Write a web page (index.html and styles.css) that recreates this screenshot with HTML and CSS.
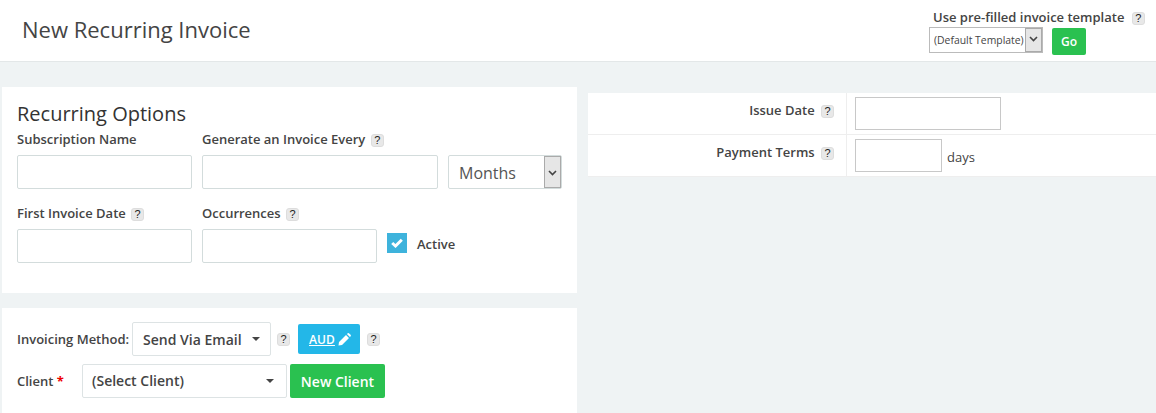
FILE: index.html
```html
<!DOCTYPE html>
<html lang="en">
<head>
<meta charset="utf-8">
<title>New Recurring Invoice</title>
<link rel="stylesheet" href="styles.css">
</head>
<body>
<header class="topbar">
  <h1 class="page-title">New Recurring Invoice</h1>
  <div class="template">
    <div class="template-label">Use pre-filled invoice template <span class="help help-wide">?</span></div>
    <div class="template-controls">
      <div class="sel sel-template">
        <select class="template-select"><option>(Default Template)</option></select>
        <span class="sel-btn"><svg width="9" height="6" viewBox="0 0 9 6"><path d="M1 1 4.5 4.5 8 1" fill="none" stroke="#444" stroke-width="1.6"/></svg></span>
      </div>
      <button class="btn-go" type="button">Go</button>
    </div>
  </div>
</header>
<main class="content">
  <div class="left">
    <section class="card card-options">
      <h2 class="card-title">Recurring Options</h2>
      <div class="row row-a">
        <div class="field">
          <label class="lbl">Subscription Name</label>
          <input class="input w175" type="text">
        </div>
        <div class="field">
          <label class="lbl">Generate an Invoice Every <span class="help">?</span></label>
          <input class="input w236" type="text">
        </div>
        <div class="sel sel-period">
          <select class="input period"><option>Months</option></select>
          <span class="sel-btn"><svg width="9" height="6" viewBox="0 0 9 6"><path d="M1 1 4.5 4.5 8 1" fill="none" stroke="#444" stroke-width="1.6"/></svg></span>
        </div>
      </div>
      <div class="row row-b">
        <div class="field">
          <label class="lbl">First Invoice Date <span class="help">?</span></label>
          <input class="input w175" type="text">
        </div>
        <div class="field">
          <label class="lbl">Occurrences <span class="help">?</span></label>
          <input class="input w175" type="text">
        </div>
        <div class="active">
          <span class="check"><svg width="12" height="10" viewBox="0 0 12 10"><path d="M1.2 5 4.5 8 10.8 1.8" fill="none" stroke="#fff" stroke-width="3"/></svg></span>
          <span class="lbl">Active</span>
        </div>
      </div>
    </section>
    <section class="card card-client">
      <div class="line line-method">
        <span class="lbl">Invoicing Method:</span>
        <div class="dropdown dd-method">Send Via Email<i class="caret"></i></div>
        <span class="help help-m1">?</span>
        <a class="btn-aud" href="#"><u>AUD</u><svg width="13" height="13" viewBox="0 0 13 13"><path d="M0.5 12.5 1 9 8 2 11 5 4 12Z M8.9 1.1 9.8.3Q10.5-.2 11.2.4L12.6 1.8Q13.2 2.5 12.7 3.2L11.9 4.1Z" fill="#fff"/></svg></a>
        <span class="help help-m2">?</span>
      </div>
      <div class="line line-client">
        <span class="lbl lbl-client">Client <b class="req">*</b></span>
        <div class="dropdown dd-client">(Select Client)<i class="caret"></i></div>
        <button class="btn-new" type="button">New Client</button>
      </div>
    </section>
  </div>
  <section class="right">
    <div class="dt-row">
      <div class="dt-label">Issue Date <span class="help help-dt">?</span></div>
      <div class="dt-value"><input class="plain w146" type="text"></div>
    </div>
    <div class="dt-row dt-last">
      <div class="dt-label">Payment Terms <span class="help help-dt">?</span></div>
      <div class="dt-value"><input class="plain w87" type="text"><span class="days">days</span></div>
    </div>
  </section>
</main>
</body>
</html>
```
FILE: styles.css
```css
* { box-sizing: border-box; }
html, body { margin: 0; height: 413px; overflow: hidden; }
body { background: #eff3f4; font-family: "Open Sans", sans-serif; color: #444; font-size: 13px; }

.topbar { height: 62px; background: #fff; border-bottom: 1px solid #e3e7e8; display: flex; justify-content: space-between; }
.page-title { margin: 14px 0 0 22px; font-size: 22px; line-height: 30px; font-weight: 400; color: #444; }
.template { width: 223px; padding-top: 8px; }
.template-label { font-size: 13px; font-weight: 600; line-height: 18px; color: #444; white-space: nowrap; }
.template-controls { display: flex; align-items: flex-start; margin: 2px 0 0 -4px; }
.sel { position: relative; }
.sel-template { width: 114px; height: 26px; margin-top: -1px; }
.template-select { display: block; width: 100%; height: 100%; padding: 0 0 0 4px; appearance: none; font: 400 10.4px "Open Sans", sans-serif; color: #444; background: #fff; border: 1px solid #bbb; border-radius: 0; }
.sel-btn { position: absolute; top: 1px; right: 1px; bottom: 1px; width: 17px; display: flex; justify-content: center; padding-top: 7px; background: #e6e6e6; border: 1px solid #aaa; }
.btn-go { width: 34px; height: 27px; margin-left: 9px; padding: 0; border: 0; border-radius: 2px; background: #2ac150; color: #fff; font: 600 12px "Open Sans", sans-serif; }

.help { display: inline-block; width: 13px; height: 13px; margin-left: 2px; border-radius: 3px; background: #e8e8e8; border: 1px solid #ddd; color: #222; font: 400 11px/11px "Liberation Sans", sans-serif; text-align: center; vertical-align: 0; }
.help-wide { margin-left: 4px; }

.content { display: flex; align-items: flex-start; }
.left { width: 575px; margin-left: 2px; }
.card { background: #fff; }
.card-options { height: 206px; margin-top: 25px; padding: 15px 15px 0; }
.card-client { height: 105px; margin-top: 15px; padding: 14px 15px 0; }
.card-title { margin: 0; font-size: 20px; line-height: 24px; font-weight: 400; color: #333; }

.row { display: flex; align-items: flex-start; }
.row-a { margin-top: 2px; }
.row-b { margin-top: 13px; }
.field { margin-right: 10px; }
.lbl { display: block; height: 27px; font-size: 13px; font-weight: 600; line-height: 22px; color: #444; white-space: nowrap; }
.input { display: block; height: 34px; border: 1px solid #d3dcdc; border-radius: 2px; background: #fff; }
.w175 { width: 175px; }
.w236 { width: 236px; }
.sel-period { width: 114px; height: 34px; margin-top: 27px; }
.period { width: 100%; padding: 2px 20px 0 10px; appearance: none; font: 400 16px "Open Sans", sans-serif; color: #555; }
.sel-period .sel-btn { padding-top: 13px; }
.active { display: flex; align-items: center; margin-top: 30px; }
.check { display: flex; align-items: center; justify-content: center; width: 20px; height: 20px; background: #3eb3dc; }
.active .lbl { margin-left: 10px; height: 22px; line-height: 24px; }

.line { display: flex; align-items: center; }
.line .lbl { height: auto; }
.dropdown { position: relative; height: 34px; border: 1px solid #dde3e4; border-radius: 2px; background: #fff; padding-left: 10px; font-size: 14px; font-weight: 600; line-height: 33px; color: #444; white-space: nowrap; }
.caret { position: absolute; right: 10px; top: 14px; border: 4px solid transparent; border-top-color: #444; border-bottom: 0; }
.dd-method { width: 139px; margin-left: 3px; }
.help-m1 { margin-left: 6px; }
.btn-aud { display: flex; align-items: center; gap: 3px; height: 30px; width: 62px; margin-left: 8px; padding-left: 11px; background: #23b7e8; border-radius: 2px; color: #fff; font-size: 12px; font-weight: 600; }
.help-m2 { margin-left: 7px; }
.line-client { margin-top: 8px; }
.lbl-client { width: 65px; line-height: 20px; }
.req { color: #e00; font-weight: 700; }
.dd-client { width: 205px; padding-left: 9px; line-height: 32px; }
.dd-client .caret { right: 12px; }
.btn-new { width: 95px; height: 34px; margin-left: 3px; padding: 0; border: 0; border-radius: 2px; background: #2ac150; color: #fff; font: 600 14px "Open Sans", sans-serif; }

.right { flex: 1; margin: 31px 0 0 11px; background: #fff; }
.dt-row { display: flex; height: 42px; border-bottom: 1px solid #eee; }
.dt-label { width: 259px; padding: 7px 12px 0 0; border-right: 1px solid #eee; text-align: right; font-size: 13px; font-weight: 600; line-height: 20px; color: #444; }
.help-dt { margin-left: 3px; }
.dt-value { display: flex; padding: 4px 0 0 8px; }
.plain { display: block; height: 33px; border: 1px solid #c8c8c8; background: #fff; }
.w146 { width: 146px; }
.w87 { width: 87px; }
.days { margin: 8px 0 0 5px; font-size: 13px; line-height: 20px; color: #444; }
```
